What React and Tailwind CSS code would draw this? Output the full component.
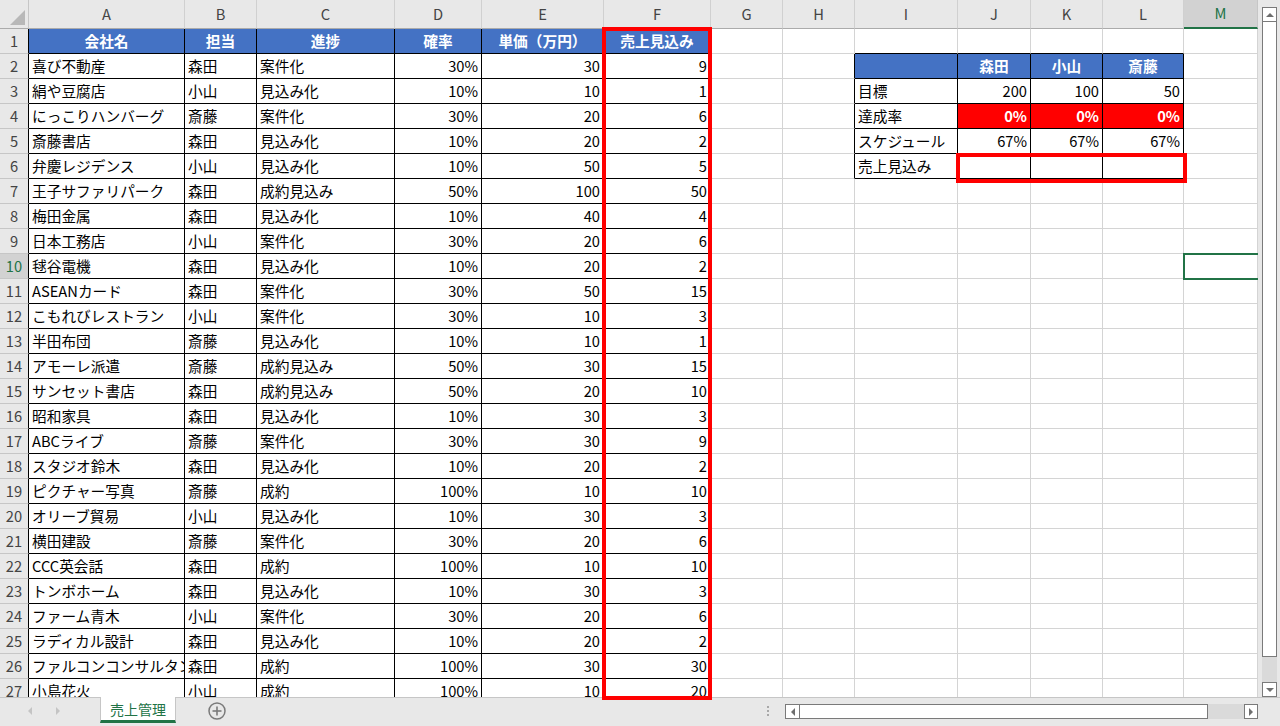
import React from "react";

const LETTERS = ["", "A", "B", "C", "D", "E", "F", "G", "H", "I", "J", "K", "L", "M"];

const HEAD = ["会社名", "担当", "進捗", "確率", "単価（万円）", "売上見込み"];
const DATA = [
  ["喜び不動産", "森田", "案件化", "30%", "30", "9"],
  ["絹や豆腐店", "小山", "見込み化", "10%", "10", "1"],
  ["にっこりハンバーグ", "斎藤", "案件化", "30%", "20", "6"],
  ["斎藤書店", "森田", "見込み化", "10%", "20", "2"],
  ["弁慶レジデンス", "小山", "見込み化", "10%", "50", "5"],
  ["王子サファリパーク", "森田", "成約見込み", "50%", "100", "50"],
  ["梅田金属", "森田", "見込み化", "10%", "40", "4"],
  ["日本工務店", "小山", "案件化", "30%", "20", "6"],
  ["毬谷電機", "森田", "見込み化", "10%", "20", "2"],
  ["ASEANカード", "森田", "案件化", "30%", "50", "15"],
  ["こもれびレストラン", "小山", "案件化", "30%", "10", "3"],
  ["半田布団", "斎藤", "見込み化", "10%", "10", "1"],
  ["アモーレ派遣", "斎藤", "成約見込み", "50%", "30", "15"],
  ["サンセット書店", "森田", "成約見込み", "50%", "20", "10"],
  ["昭和家具", "森田", "見込み化", "10%", "30", "3"],
  ["ABCライブ", "斎藤", "案件化", "30%", "30", "9"],
  ["スタジオ鈴木", "森田", "見込み化", "10%", "20", "2"],
  ["ピクチャー写真", "斎藤", "成約", "100%", "10", "10"],
  ["オリーブ貿易", "小山", "見込み化", "10%", "30", "3"],
  ["横田建設", "斎藤", "案件化", "30%", "20", "6"],
  ["CCC英会話", "森田", "成約", "100%", "10", "10"],
  ["トンボホーム", "森田", "見込み化", "10%", "30", "3"],
  ["ファーム青木", "小山", "案件化", "30%", "20", "6"],
  ["ラディカル設計", "森田", "見込み化", "10%", "20", "2"],
  ["ファルコンコンサルタント", "森田", "成約", "100%", "30", "30"],
  ["小島花火", "小山", "成約", "100%", "10", "20"],
];

const SIDE = {
  2: [["", "hdr"], ["森田", "hdr"], ["小山", "hdr"], ["斎藤", "hdr"]],
  3: [["目標", "txt"], ["200", "num"], ["100", "num"], ["50", "num"]],
  4: [["達成率", "txt"], ["0%", "red"], ["0%", "red"], ["0%", "red"]],
  5: [["スケジュール", "txt"], ["67%", "num"], ["67%", "num"], ["67%", "num"]],
  6: [["売上見込み", "txt"], ["", "num"], ["", "num"], ["", "num"]],
};

function inTable(r, c) {
  return (r >= 1 && r <= 27 && c >= 1 && c <= 6) || (r >= 2 && r <= 6 && c >= 9 && c <= 12);
}

function cellInfo(r, c) {
  if (r === 1 && c >= 1 && c <= 6) return [HEAD[c - 1], "hdr"];
  if (r >= 2 && r <= 27 && c >= 1 && c <= 6) {
    const v = DATA[r - 2][c - 1];
    return [v, c >= 4 ? "num" : "txt"];
  }
  if (SIDE[r] && c >= 9 && c <= 12) return SIDE[r][c - 9];
  return ["", "txt"];
}

function Cell({ r, c }) {
  const [text, kind] = cellInfo(r, c);
  const rb = inTable(r, c) || inTable(r, c + 1) ? "border-r-black" : "border-r-[#d4d4d4]";
  const bb = inTable(r, c) || inTable(r + 1, c) ? "border-b-black" : "border-b-[#d4d4d4]";
  let k = "bg-white text-black justify-start";
  if (kind === "hdr") k = "bg-[#4472c4] text-white font-bold justify-center";
  else if (kind === "red") k = "bg-[#ff0000] text-white font-bold justify-end";
  else if (kind === "num") k = "bg-white text-black justify-end";
  return (
    <div
      className={`flex items-center overflow-hidden whitespace-nowrap border-r border-b px-[3px] ${rb} ${bb} ${k}`}
    >
      {text}
    </div>
  );
}

function ColHeader({ c }) {
  if (c === 0) {
    return (
      <div className="relative border-r border-b border-r-[#c6c6c6] border-b-[#ababab] bg-[#e8e8e8]">
        <svg className="absolute left-0 top-0" width="29" height="29" viewBox="0 0 29 29">
          <polygon points="25,10 25,25 10,25" fill="#b8b8b8" />
        </svg>
      </div>
    );
  }
  if (c === 13) {
    return (
      <div className="flex items-center justify-center border-r border-r-[#c6c6c6] border-b-2 border-b-[#217346] bg-[#d2d2d2] text-[#217346]">
        M
      </div>
    );
  }
  return (
    <div className="flex items-center justify-center border-r border-b border-r-[#d0d0d0] border-b-[#ababab] bg-[#e8e8e8] text-[#444]">
      {LETTERS[c]}
    </div>
  );
}

function RowHeader({ r }) {
  if (r === 10) {
    return (
      <div className="flex items-center justify-center border-r border-b border-r-black border-b-[#c6c6c6] bg-[#d2d2d2] text-[#217346]">
        {r}
      </div>
    );
  }
  return (
    <div className="flex items-center justify-center border-r border-b border-r-black border-b-[#c6c6c6] bg-[#e8e8e8] text-[#444]">
      {r}
    </div>
  );
}

function Grid() {
  const cells = [];
  for (let r = 0; r <= 27; r++) {
    for (let c = 0; c <= 13; c++) {
      const key = `${r}-${c}`;
      if (r === 0) cells.push(<ColHeader key={key} c={c} />);
      else if (c === 0) cells.push(<RowHeader key={key} r={r} />);
      else cells.push(<Cell key={key} r={r} c={c} />);
    }
  }
  return (
    <div className="grid grid-cols-[29px_156px_72px_138px_87px_122px_107px_72px_72px_103px_73px_72px_81px_74px] grid-rows-[29px_repeat(27,25px)]">
      {cells}
    </div>
  );
}

function Tri({ dir, color = "#6e6e6e" }) {
  const pts = {
    up: "1,6 5,2 9,6",
    down: "1,2 5,6 9,2",
    left: "6,1 2,5 6,9",
    right: "2,1 6,5 2,9",
  }[dir];
  const w = dir === "up" || dir === "down" ? 10 : 8;
  const h = dir === "up" || dir === "down" ? 8 : 10;
  return (
    <svg width={w} height={h} viewBox={`0 0 ${w} ${h}`}>
      <polygon points={pts} fill={color} />
    </svg>
  );
}

function VScroll() {
  return (
    <div className="flex h-[697px] w-[22px] flex-col bg-[#e8e8e8] pl-[4px] pr-[3px] pt-[7px]">
      <div className="flex h-[15px] items-center justify-center border border-[#7a7a7a] bg-white">
        <Tri dir="up" />
      </div>
      <div className="h-[635px] border border-t-0 border-[#7a7a7a] bg-white" />
      <div className="flex-1 bg-[#dadada]" />
      <div className="flex h-[15px] items-center justify-center border border-[#7a7a7a] bg-white">
        <Tri dir="down" />
      </div>
    </div>
  );
}

function BottomBar() {
  return (
    <div className="flex h-[29px] items-start border-t border-t-[#c6c6c6] bg-[#e8e8e8]">
      <div className="flex h-[25px] w-[100px] items-center pl-[26px]">
        <Tri dir="left" color="#c4c4c4" />
        <div className="ml-[20px]">
          <Tri dir="right" color="#c4c4c4" />
        </div>
      </div>
      <div className="-mt-px flex h-[26px] w-[76px] items-center justify-center border-x border-x-[#c6c6c6] border-b-[3px] border-b-[#217346] bg-white text-[14px] text-[#217346]">
        売上管理
      </div>
      <div className="ml-[32px] mt-[4px] flex h-[18px] w-[18px] items-center justify-center">
        <svg width="18" height="18" viewBox="0 0 18 18">
          <circle cx="9" cy="9" r="8" fill="none" stroke="#7a7a7a" strokeWidth="1.5" />
          <line x1="9" y1="4.5" x2="9" y2="13.5" stroke="#7a7a7a" strokeWidth="1.6" />
          <line x1="4.5" y1="9" x2="13.5" y2="9" stroke="#7a7a7a" strokeWidth="1.6" />
        </svg>
      </div>
      <div className="ml-[541px] mt-[8px] flex flex-col gap-[2px]">
        <div className="h-[2px] w-[2px] bg-[#a8a8a8]" />
        <div className="h-[2px] w-[2px] bg-[#a8a8a8]" />
        <div className="h-[2px] w-[2px] bg-[#a8a8a8]" />
      </div>
      <div className="ml-[16px] mt-[6px] flex h-[15px] w-[473px]">
        <div className="flex w-[15px] items-center justify-center border border-[#7a7a7a] bg-white">
          <Tri dir="left" />
        </div>
        <div className="w-[408px] border border-l-0 border-[#7a7a7a] bg-white" />
        <div className="w-[36px] bg-[#dadada]" />
        <div className="flex w-[14px] items-center justify-center border border-[#7a7a7a] bg-white">
          <Tri dir="right" />
        </div>
      </div>
    </div>
  );
}

export default function App() {
  return (
    <div className="relative h-[726px] w-[1280px] overflow-hidden bg-[#e8e8e8] font-[family-name:'Noto_Sans_CJK_JP','Noto_Sans',sans-serif] text-[14.7px] leading-none">
      <div className="flex h-[697px]">
        <div className="h-[697px] w-[1258px] overflow-hidden bg-white">
          <Grid />
        </div>
        <VScroll />
      </div>
      <BottomBar />
      {/* red outline around column F */}
      <div className="pointer-events-none absolute left-[602px] top-[27px] h-[673px] w-[110px] border-4 border-[#ff0000]" />
      {/* red outline around J6:L6 */}
      <div className="pointer-events-none absolute left-[956px] top-[153px] h-[30px] w-[231px] border-4 border-[#ff0000]" />
      {/* selected cell M10 */}
      <div className="pointer-events-none absolute left-[1183px] top-[253px] h-[27px] w-[75px] border-2 border-r-0 border-[#217346]" />
    </div>
  );
}
